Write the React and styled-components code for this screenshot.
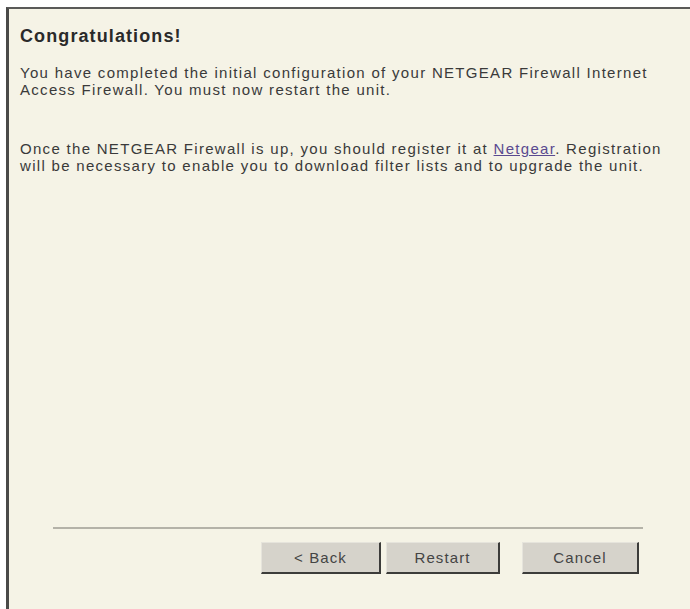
import React from 'react'
import styled, { createGlobalStyle } from 'styled-components'

const GlobalStyle = createGlobalStyle`
  html, body {
    margin: 0;
    padding: 0;
    background: #ffffff;
  }
  body {
    font-family: "Liberation Sans", Arial, sans-serif;
  }
`;

const Frame = styled.div`
  margin: 7px 0 0 6px;
  height: 602px;
  box-sizing: border-box;
  border-top: 2px solid #5a5a58;
  border-left: 3px solid #4a4a48;
  background: #f5f3e6;
  display: flex;
  flex-direction: column;
  padding: 16px 0 35px 11px;
`;

const Title = styled.h1`
  margin: 0;
  font-size: 18px;
  line-height: 22px;
  font-weight: 700;
  color: #2a2a2a;
  letter-spacing: 1.1px;
`;

const Text = styled.p`
  margin: ${({ $top }) => $top}px 0 0 0;
  font-size: 15px;
  line-height: 17px;
  color: #3a3a3a;
  letter-spacing: 1.3px;
  white-space: nowrap;
`;

const Link = styled.a`
  color: #5a4a90;
  text-decoration: underline;
`;

const Footer = styled.div`
  margin-top: auto;
  margin-left: 33px;
  margin-right: 47px;
  display: flex;
  flex-direction: column;
`;

const Rule = styled.div`
  height: 2px;
  background: #b4b2a8;
`;

const Buttons = styled.div`
  display: flex;
  justify-content: flex-end;
  margin-top: 13px;
  margin-right: 4px;
`;

const Button = styled.button`
  width: ${({ $w }) => $w}px;
  height: 32px;
  margin-left: ${({ $gap }) => $gap}px;
  box-sizing: border-box;
  background: #d6d3cb;
  border: none;
  border-right: 2px solid #3c3c3a;
  border-bottom: 2px solid #3c3c3a;
  border-top: 1px solid #e6e4dc;
  border-left: 1px solid #e6e4dc;
  font-family: "Liberation Sans", Arial, sans-serif;
  font-size: 15px;
  color: #444;
  padding: 0;
  letter-spacing: 1.1px;
`;

export default function App() {
  return (
    <>
      <GlobalStyle />
      <Frame>
        <Title>Congratulations!</Title>
        <Text $top={17}>
          You have completed the initial configuration of your NETGEAR Firewall Internet
          <br />
          Access Firewall. You must now restart the unit.
        </Text>
        <Text $top={42}>
          Once the NETGEAR Firewall is up, you should register it at <Link href="#">Netgear</Link>. Registration
          <br />
          will be necessary to enable you to download filter lists and to upgrade the unit.
        </Text>
        <Footer>
          <Rule />
          <Buttons>
            <Button $w={120} $gap={0}>&lt; Back</Button>
            <Button $w={114} $gap={5}>Restart</Button>
            <Button $w={117} $gap={22}>Cancel</Button>
          </Buttons>
        </Footer>
      </Frame>
    </>
  )
}
